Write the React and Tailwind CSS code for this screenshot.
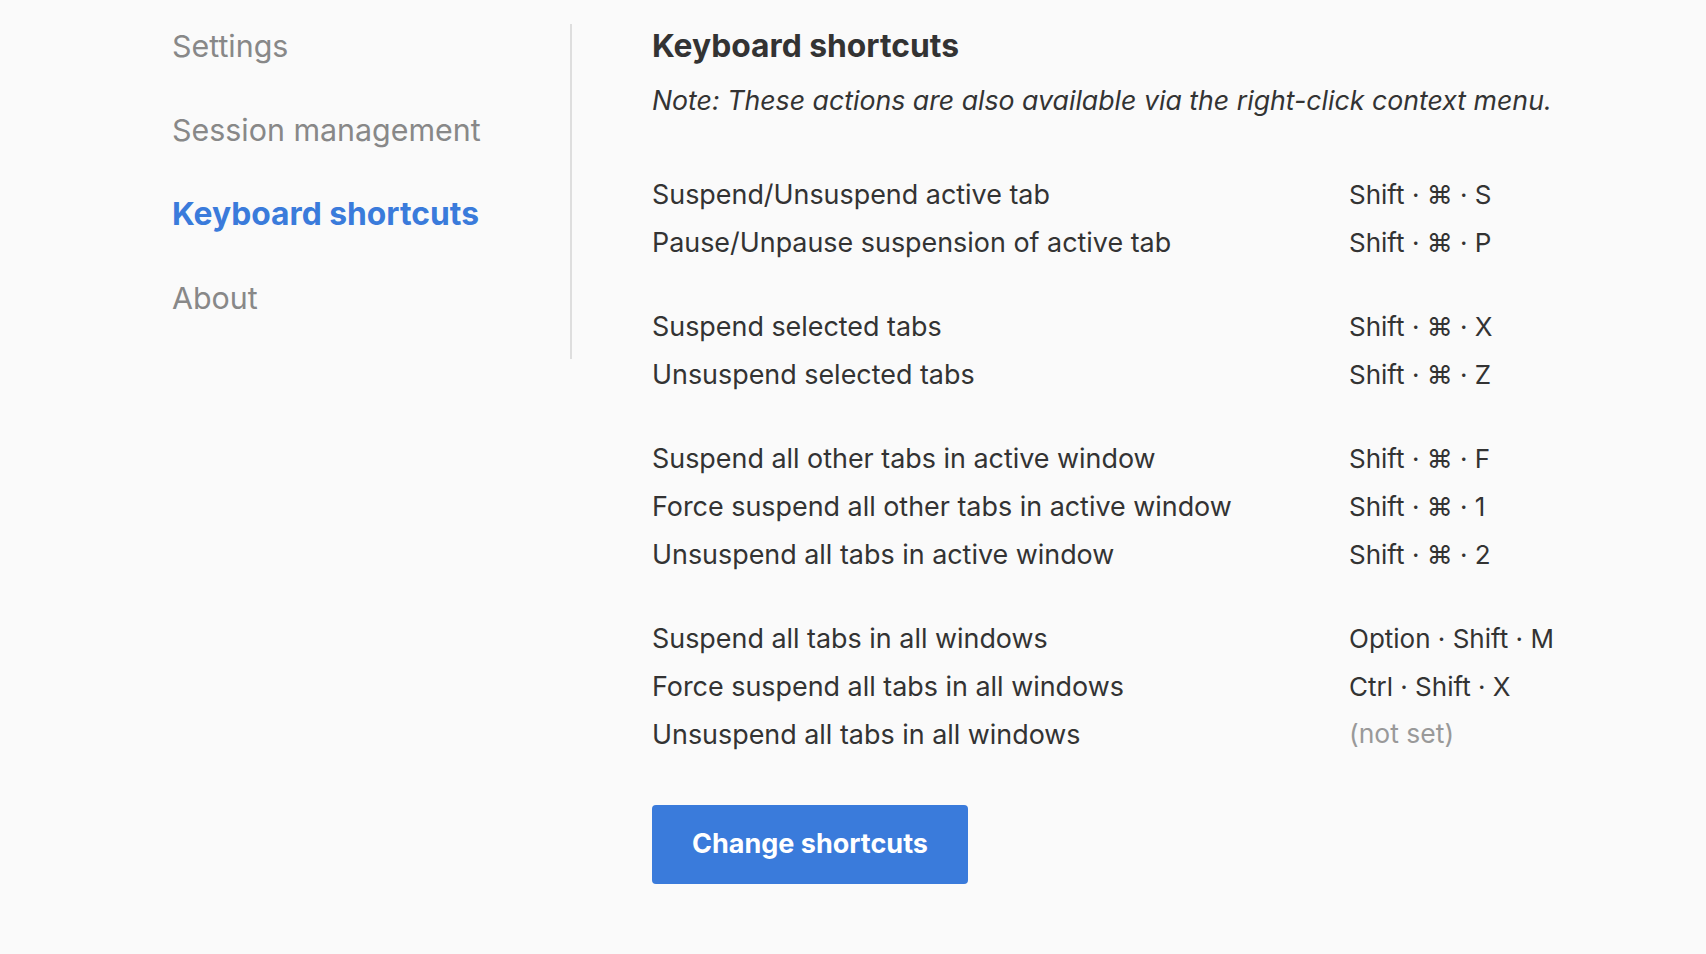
import React from 'react';

const navItems = ['Settings', 'Session management', 'Keyboard shortcuts', 'About'];

// shortcut groups, separated by a larger gap
const groups = [
    [
        ['Suspend/Unsuspend active tab', 'Shift · ⌘ · S'],
        ['Pause/Unpause suspension of active tab', 'Shift · ⌘ · P'],
    ],
    [
        ['Suspend selected tabs', 'Shift · ⌘ · X'],
        ['Unsuspend selected tabs', 'Shift · ⌘ · Z'],
    ],
    [
        ['Suspend all other tabs in active window', 'Shift · ⌘ · F'],
        ['Force suspend all other tabs in active window', 'Shift · ⌘ · 1'],
        ['Unsuspend all tabs in active window', 'Shift · ⌘ · 2'],
    ],
    [
        ['Suspend all tabs in all windows', 'Option · Shift · M'],
        ['Force suspend all tabs in all windows', 'Ctrl · Shift · X'],
        ['Unsuspend all tabs in all windows', null],
    ],
];

const App = () => {
    const active = 'Keyboard shortcuts';

    return (
        <div className="min-h-[954px] w-full bg-[#fafafa] font-['Inter','Noto_Sans',sans-serif] text-[#333]">
            <div className="flex items-start pl-[172px] pt-[24px]">
                <nav className="flex w-[400px] flex-col gap-[40px] border-r-2 border-[#dedede] pb-[39px]">
                    {navItems.map((item) => (
                        <a
                            key={item}
                            href="#"
                            className={`leading-[44px] ${
                                item === active
                                    ? 'text-[31.8px] font-bold text-[#3a7bdb]'
                                    : 'text-[30.4px] text-[#888]'
                            }`}
                        >
                            {item}
                        </a>
                    ))}
                </nav>

                <div className="flex flex-col pl-[80px]">
                    <h2 className="text-[31.8px] font-bold leading-[44px] text-[#333]">Keyboard shortcuts</h2>
                    <p className="mt-[12px] text-[26.7px] italic leading-[40px] text-[#333]">
                        Note: These actions are also available via the right-click context menu.
                    </p>

                    <div className="mt-[50px] flex flex-col gap-[36px]">
                        {groups.map((group, gi) => (
                            <div key={gi} className="flex flex-col">
                                {group.map(([label, keys]) => (
                                    <div key={label} className="flex h-[48px] items-center">
                                        <span className="w-[697px] text-[26.9px]">{label}</span>
                                        {keys ? (
                                            <span className="text-[26px] text-[#333]">{keys}</span>
                                        ) : (
                                            <span className="text-[26.5px] text-[#999]">(not set)</span>
                                        )}
                                    </div>
                                ))}
                            </div>
                        ))}
                    </div>

                    <div className="mt-[47px]">
                        <button
                            type="button"
                            className="h-[79px] w-[316px] rounded-[4px] bg-[#3a7bdb] text-[27px] font-bold text-white"
                        >
                            Change shortcuts
                        </button>
                    </div>
                </div>
            </div>
        </div>
    );
};

export default App;
